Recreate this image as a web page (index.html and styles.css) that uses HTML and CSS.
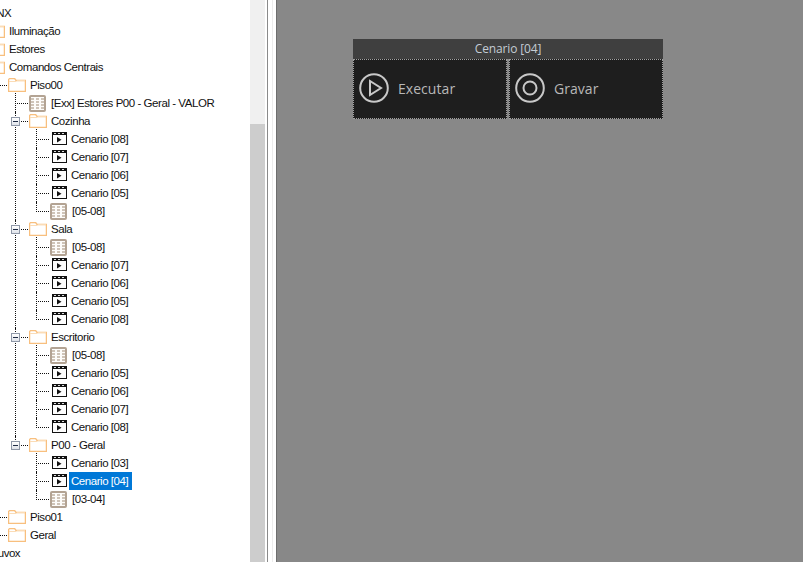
FILE: index.html
```html
<!DOCTYPE html>
<html lang="pt">
<head>
<meta charset="utf-8">
<title>Cenario [04]</title>
<link rel="stylesheet" href="styles.css">
</head>
<body>
<svg class="defs" width="0" height="0" aria-hidden="true">
  <symbol id="folder" viewBox="0 0 18 14">
    <path d="M.6 13.400V1.500l1-1h5l1.500 2h9.300v10.900z" fill="#fff" stroke="#f8bf7e" stroke-width="1.300"/>
    <path d="M1 3.500h7l1-1h8" fill="none" stroke="#fbdcb6"/>
  </symbol>
  <symbol id="grid" viewBox="0 0 17 17">
    <rect x="1" y="1" width="15" height="15" rx="1" fill="#fdfcfa" stroke="#b3a393" stroke-width="2"/>
    <path d="M3.500 3v11M8.500 3v11M13.500 3v11" stroke="#cfc4b8" stroke-width="3" stroke-dasharray="2 1"/>
  </symbol>
  <symbol id="clip" viewBox="0 0 15 13">
    <rect x=".5" y=".5" width="14" height="12" fill="#fdfdfd" stroke="#111"/>
    <path d="M0 0h15v3H0z" fill="#111"/>
    <path d="M2 1h2v1H2zM6 1h2v1H6zM10 1h2v1h-2z" fill="#ddd"/>
    <path d="M5 5v5.500l4.500-2.700z" fill="#111"/>
  </symbol>
</svg>
<div class="app">
  <aside class="tree-pane">
    <ul class="tree root">
      <li class="node"><div class="row"><span class="label">KNX</span></div>
        <ul class="tree">
          <li class="node"><div class="row"><svg class="folder"><use href="#folder"/></svg><span class="label">Iluminação</span></div></li>
          <li class="node"><div class="row"><svg class="folder"><use href="#folder"/></svg><span class="label">Estores</span></div></li>
          <li class="node"><div class="row"><svg class="folder"><use href="#folder"/></svg><span class="label">Comandos Centrais</span></div>
            <ul class="tree">
              <li class="node"><div class="row"><svg class="folder"><use href="#folder"/></svg><span class="label">Piso00</span></div>
                <ul class="tree">
                  <li class="node"><div class="row"><svg class="grid"><use href="#grid"/></svg><span class="label">[Exx] Estores P00 - Geral - VALOR</span></div></li>
                  <li class="node"><div class="row"><span class="minus"></span><svg class="folder"><use href="#folder"/></svg><span class="label">Cozinha</span></div>
                    <ul class="tree">
                      <li class="node"><div class="row"><svg class="clip"><use href="#clip"/></svg><span class="label">Cenario [08]</span></div></li>
                      <li class="node"><div class="row"><svg class="clip"><use href="#clip"/></svg><span class="label">Cenario [07]</span></div></li>
                      <li class="node"><div class="row"><svg class="clip"><use href="#clip"/></svg><span class="label">Cenario [06]</span></div></li>
                      <li class="node"><div class="row"><svg class="clip"><use href="#clip"/></svg><span class="label">Cenario [05]</span></div></li>
                      <li class="node"><div class="row"><svg class="grid"><use href="#grid"/></svg><span class="label">[05-08]</span></div></li>
                    </ul>
                  </li>
                  <li class="node"><div class="row"><span class="minus"></span><svg class="folder"><use href="#folder"/></svg><span class="label">Sala</span></div>
                    <ul class="tree">
                      <li class="node"><div class="row"><svg class="grid"><use href="#grid"/></svg><span class="label">[05-08]</span></div></li>
                      <li class="node"><div class="row"><svg class="clip"><use href="#clip"/></svg><span class="label">Cenario [07]</span></div></li>
                      <li class="node"><div class="row"><svg class="clip"><use href="#clip"/></svg><span class="label">Cenario [06]</span></div></li>
                      <li class="node"><div class="row"><svg class="clip"><use href="#clip"/></svg><span class="label">Cenario [05]</span></div></li>
                      <li class="node"><div class="row"><svg class="clip"><use href="#clip"/></svg><span class="label">Cenario [08]</span></div></li>
                    </ul>
                  </li>
                  <li class="node"><div class="row"><span class="minus"></span><svg class="folder"><use href="#folder"/></svg><span class="label">Escritorio</span></div>
                    <ul class="tree">
                      <li class="node"><div class="row"><svg class="grid"><use href="#grid"/></svg><span class="label">[05-08]</span></div></li>
                      <li class="node"><div class="row"><svg class="clip"><use href="#clip"/></svg><span class="label">Cenario [05]</span></div></li>
                      <li class="node"><div class="row"><svg class="clip"><use href="#clip"/></svg><span class="label">Cenario [06]</span></div></li>
                      <li class="node"><div class="row"><svg class="clip"><use href="#clip"/></svg><span class="label">Cenario [07]</span></div></li>
                      <li class="node"><div class="row"><svg class="clip"><use href="#clip"/></svg><span class="label">Cenario [08]</span></div></li>
                    </ul>
                  </li>
                  <li class="node"><div class="row"><span class="minus"></span><svg class="folder"><use href="#folder"/></svg><span class="label">P00 - Geral</span></div>
                    <ul class="tree">
                      <li class="node"><div class="row"><svg class="clip"><use href="#clip"/></svg><span class="label">Cenario [03]</span></div></li>
                      <li class="node"><div class="row"><svg class="clip"><use href="#clip"/></svg><span class="label selected">Cenario [04]</span></div></li>
                      <li class="node"><div class="row"><svg class="grid"><use href="#grid"/></svg><span class="label">[03-04]</span></div></li>
                    </ul>
                  </li>
                </ul>
              </li>
              <li class="node"><div class="row"><svg class="folder"><use href="#folder"/></svg><span class="label">Piso01</span></div></li>
              <li class="node"><div class="row"><svg class="folder"><use href="#folder"/></svg><span class="label">Geral</span></div></li>
            </ul>
          </li>
        </ul>
      </li>
      <li class="node"><div class="row"><span class="label">Fluvox</span></div></li>
    </ul>
  </aside>
  <div class="scrollbar"><div class="thumb"></div></div>
  <div class="splitter"></div>
  <main class="stage">
    <section class="widget">
      <header class="widget-title">Cenario [04]</header>
      <div class="widget-buttons">
        <button class="action" type="button">
          <svg class="action-icon" viewBox="0 0 30 30"><circle cx="15" cy="15" r="13.800"/><path d="M11 8v14l11-7z"/></svg>
          <span>Executar</span>
        </button>
        <button class="action" type="button">
          <svg class="action-icon" viewBox="0 0 30 30"><circle cx="15" cy="15" r="13.800"/><circle cx="15" cy="15" r="6.500"/></svg>
          <span>Gravar</span>
        </button>
      </div>
    </section>
  </main>
</div>
</body>
</html>
```
FILE: styles.css
```css
* { box-sizing: border-box; }
html, body { margin: 0; height: 100%; overflow: hidden; }
body { font-family: "Liberation Sans", Arial, sans-serif; background: #fff; }
.defs { position: absolute; }
.app { display: flex; width: 803px; height: 562px; }
.tree-pane { width: 250px; height: 562px; overflow: hidden; background: #fff; flex: none; }
.tree { list-style: none; margin: 0; padding: 0; }
.root { margin: 4px 0 0 -43px; }
.root > .node > .row { padding-left: 28px; }
.tree .tree { margin-left: 21px; }
.node { position: relative; }
.tree .tree > .node::before {
  content: ""; position: absolute; left: -5px; top: 9px; width: 13px;
  border-top: 1px dotted #111;
}
.tree .tree > .node::after {
  content: ""; position: absolute; left: -5px; top: 0; bottom: 0;
  border-left: 1px dotted #111;
}
.tree .tree > .node:first-child::after { top: -8px; }
.tree .tree > .node:last-child::after { bottom: auto; height: 10px; }
.row { position: relative; display: flex; align-items: center; height: 18px; padding-left: 9px; white-space: nowrap; }
.folder { width: 18px; height: 14px; flex: none; position: relative; z-index: 1; }
.grid { width: 17px; height: 17px; flex: none; margin-right: 1px; position: relative; z-index: 1; }
.clip { width: 15px; height: 13px; flex: none; margin: 0 0 2px 2px; position: relative; z-index: 1; }
.label { font-size: 11.5px; line-height: 18px; color: #111; padding: 0 4px 0 2px; margin-left: 2px; letter-spacing: -.45px; }
.selected { background: #0078d7; color: #fff; }
.minus {
  position: absolute; left: -9px; top: 5px; width: 9px; height: 9px; z-index: 2;
  border: 1px solid #8f98a8; background: linear-gradient(#fff, #dfe3ea);
}
.minus::after { content: ""; position: absolute; left: 1px; top: 3px; width: 5px; height: 1px; background: #1d2a44; }
.scrollbar { width: 15px; height: 562px; background: #f0f0f0; padding-top: 124px; flex: none; }
.thumb { width: 15px; height: 100%; background: #cdcdcd; }
.splitter {
  width: 10px; height: 562px; flex: none; margin-left: 2px;
  background: linear-gradient(#ececec, #ececec) center / 1px 100% no-repeat #fff;
  border-left: 1px solid #8a8a8a; border-right: 1px solid #6e6e6e;
}
.stage { flex: 1; background: #888; padding: 39px 0 0 76px; }
.widget { width: 310px; height: 80px; display: flex; flex-direction: column; }
.widget-title { height: 20px; background: #3f3f3f; color: #c4ccd4; font-family: "Open Sans", sans-serif; font-size: 12px; line-height: 19px; letter-spacing: -.15px; text-align: center; }
.widget-buttons { display: flex; gap: 2px; height: 60px; }
.action {
  flex: 1; display: flex; align-items: center; gap: 9px; padding: 0 0 2px 5px; margin: 0;
  background: #1e1e1e; border: 1px dotted #a0a0a0; color: #b8b8b8;
  font-family: "Open Sans", "Liberation Sans", sans-serif; font-size: 14px; letter-spacing: .05px;
}
.action-icon { width: 30px; height: 30px; flex: none; fill: none; stroke: #c8c8c8; stroke-width: 2; }
```
